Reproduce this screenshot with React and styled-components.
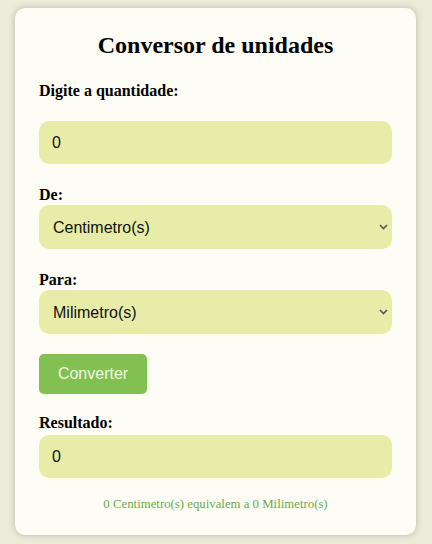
import React, { useState } from "react";
import styled, { createGlobalStyle } from "styled-components";

const GlobalStyle = createGlobalStyle`
  html, body {
    margin: 0;
    padding: 0;
    background: #ecebd9;
  }
  body {
    padding: 8px 16px 8px 15px;
    font-family: "Liberation Serif", "Times New Roman", serif;
  }
`;

const Card = styled.div`
  background: #fdfdf6;
  border-radius: 10px;
  box-shadow: 0 0 6px rgba(120, 120, 110, 0.45);
  padding: 23px 24px 24px;
  display: flex;
  flex-direction: column;
  box-sizing: border-box;
`;

const Title = styled.h1`
  margin: 0 0 23px;
  text-align: center;
  font-size: 24px;
  line-height: 28px;
  font-weight: bold;
  color: #000;
`;

const Label = styled.label`
  display: block;
  font-size: 16px;
  line-height: 18px;
  font-weight: bold;
  color: #000;
  margin-bottom: ${(p) => p.$gap ?? 1}px;
`;

const Field = styled.input`
  height: 43px;
  box-sizing: border-box;
  border: none;
  border-radius: 10px;
  background: #e7eca9;
  padding: 0 13px;
  font-family: "Liberation Sans", Arial, sans-serif;
  font-size: 16px;
  color: #111;
  margin-bottom: ${(p) => p.$gap ?? 22}px;
  outline: none;
`;

const SelectWrap = styled.div`
  position: relative;
  margin-bottom: ${(p) => p.$gap ?? 22}px;
`;

const Select = styled.select`
  appearance: none;
  width: 100%;
  height: 44px;
  border: none;
  border-radius: 10px;
  background: #e7eca9;
  padding: 0 14px;
  font-family: "Liberation Sans", Arial, sans-serif;
  font-size: 16px;
  color: #111;
  outline: none;
`;

const Chevron = styled.svg`
  position: absolute;
  right: 4px;
  top: 19px;
  pointer-events: none;
`;

const Button = styled.button`
  align-self: flex-start;
  width: 108px;
  height: 40px;
  border: none;
  border-radius: 5px;
  background: #82c052;
  color: #eef8e4;
  font-family: "Liberation Sans", Arial, sans-serif;
  font-size: 16px;
  margin: 0 0 20px;
  cursor: pointer;
`;

const Note = styled.p`
  margin: 19px 0 0;
  text-align: center;
  font-size: 12.8px;
  line-height: 14px;
  color: #6aab48;
`;

const units = ["Centimetro(s)", "Milimetro(s)", "Metro(s)", "Quilometro(s)"];

const UnitSelect = ({ value, onChange, gap }) => (
  <SelectWrap $gap={gap}>
    <Select value={value} onChange={(e) => onChange(e.target.value)}>
      {units.map((u) => (
        <option key={u}>{u}</option>
      ))}
    </Select>
    <Chevron width="9" height="6" viewBox="0 0 9 6">
      <path d="M1 1l3.5 3.5L8 1" fill="none" stroke="#555" strokeWidth="1.6" />
    </Chevron>
  </SelectWrap>
);

export default function App() {
  const [amount, setAmount] = useState("0");
  const [from, setFrom] = useState("Centimetro(s)");
  const [to, setTo] = useState("Milimetro(s)");

  return (
    <>
      <GlobalStyle />
      <Card>
        <Title>Conversor de unidades</Title>
        <Label $gap={21}>Digite a quantidade:</Label>
        <Field value={amount} onChange={(e) => setAmount(e.target.value)} />
        <Label>De:</Label>
        <UnitSelect value={from} onChange={setFrom} />
        <Label>Para:</Label>
        <UnitSelect value={to} onChange={setTo} gap={20} />
        <Button>Converter</Button>
        <Label $gap={3}>Resultado:</Label>
        <Field value="0" readOnly $gap={0} />
        <Note>0 {from} equivalem a 0 {to}</Note>
      </Card>
    </>
  );
}
